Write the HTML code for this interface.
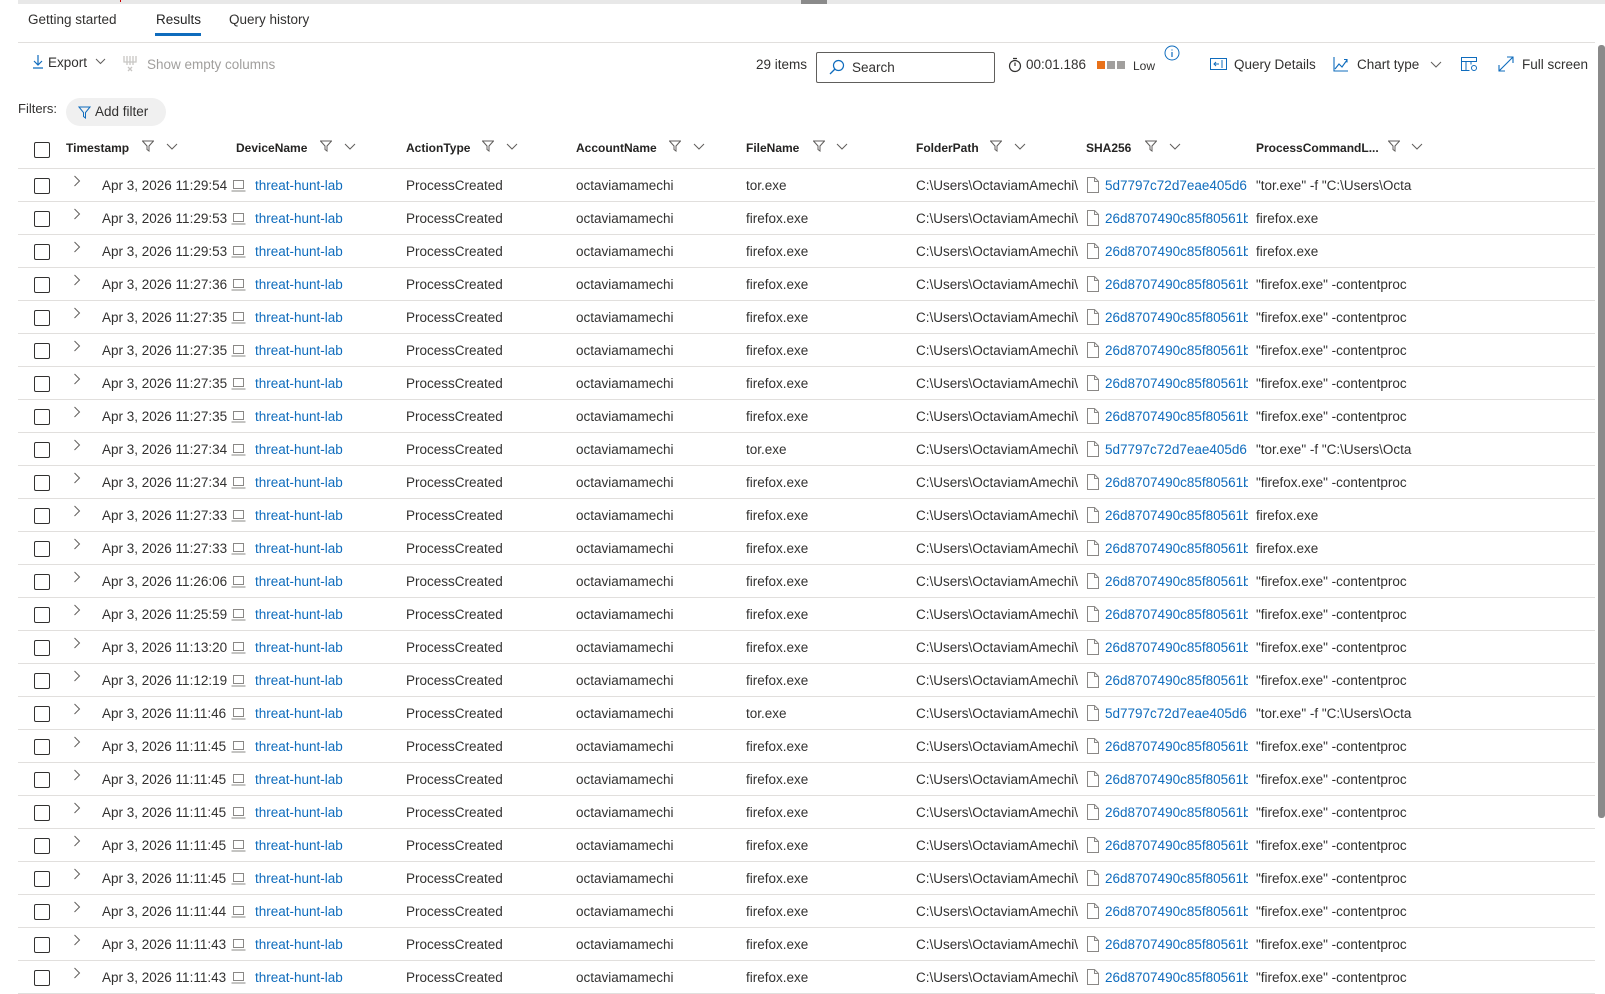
<!DOCTYPE html>
<html><head><meta charset="utf-8"><style>
*{box-sizing:border-box;margin:0;padding:0}
body{width:1605px;height:981px;overflow:hidden;background:#fff;font-family:"Liberation Sans",sans-serif;color:#323130;font-size:13.5px;position:relative}
.a{position:absolute;white-space:nowrap}
.blue{color:#0f6cbd}
.row{position:absolute;left:18px;width:1577px;height:33px;border-bottom:1px solid #e1dfdd}
.row .a{top:9px}
.cb{position:absolute;left:16px;top:9px;width:16px;height:16px;border:1.3px solid #323130;border-radius:2px}
.hd{font-weight:bold;font-size:12px;color:#252423}
.clip{overflow:hidden}
svg{position:absolute}
</style></head><body>
<div class="a" style="left:18px;top:0;width:1587px;height:4px;background:#e8e8e8"></div>
<div class="a" style="left:801px;top:0;width:26px;height:4px;background:#8a8a8a"></div>
<div class="a" style="left:120px;top:0;width:1px;height:2px;background:#c00"></div>

<div class="a" style="left:28px;top:12px;font-size:13.5px">Getting started</div>
<div class="a" style="left:156px;top:12px;font-size:13.5px;color:#242424">Results</div>
<div class="a" style="left:155px;top:33px;width:46px;height:3px;background:#0f6cbd"></div>
<div class="a" style="left:229px;top:12px;font-size:13.5px">Query history</div>
<div class="a" style="left:18px;top:42px;width:1577px;height:1px;background:#e1dfdd"></div>

<svg style="left:32px;top:54px" width="12" height="16" viewBox="0 0 12 16"><path d="M6 1v10M2 7l4 4 4-4M1 14h10" stroke="#0f6cbd" stroke-width="1.2" fill="none"/></svg>
<div class="a" style="left:48px;top:55px">Export</div>
<svg style="left:95px;top:58px" width="11" height="7" viewBox="0 0 11 7"><path d="M1 1l4.5 4.5L10 1" stroke="#605e5c" fill="none"/></svg>
<svg style="left:122px;top:55px" width="16" height="18" viewBox="0 0 16 18"><path d="M2 1v6h12V1M5 1v9M8 1v9M11 1v9M6 12l4 4M10 12l-4 4" stroke="#c8c6c4" stroke-width="1.3" fill="none"/></svg>
<div class="a" style="left:147px;top:57px;color:#a19f9d">Show empty columns</div>

<div class="a" style="left:756px;top:57px">29 items</div>
<div class="a" style="left:816px;top:52px;width:179px;height:31px;border:1px solid #605e5c;border-radius:2px"></div>
<svg style="left:829px;top:59px" width="16" height="16" viewBox="0 0 16 16"><circle cx="9.5" cy="6.5" r="5" stroke="#0f6cbd" stroke-width="1.2" fill="none"/><path d="M6 10l-5 5" stroke="#0f6cbd" stroke-width="1.3"/></svg>
<div class="a" style="left:852px;top:60px">Search</div>
<svg style="left:1008px;top:57px" width="14" height="16" viewBox="0 0 14 16"><circle cx="7" cy="9" r="5.5" stroke="#323130" stroke-width="1.2" fill="none"/><path d="M5 1.5h4M7 9V5.5" stroke="#323130" stroke-width="1.2"/></svg>
<div class="a" style="left:1026px;top:57px">00:01.186</div>
<div class="a" style="left:1097px;top:61px;width:8px;height:8px;background:#e8711a"></div>
<div class="a" style="left:1107px;top:61px;width:8px;height:8px;background:#a19f9d"></div>
<div class="a" style="left:1117px;top:61px;width:8px;height:8px;background:#a19f9d"></div>
<div class="a" style="left:1133px;top:59px;font-size:12px">Low</div>
<svg style="left:1164px;top:45px" width="16" height="16" viewBox="0 0 16 16"><circle cx="8" cy="8" r="7" stroke="#0f6cbd" fill="none"/><path d="M8 7v5M8 4.5v1" stroke="#0f6cbd" stroke-width="1.2"/></svg>
<svg style="left:1210px;top:58px" width="17" height="12" viewBox="0 0 17 12"><rect x="0.5" y="0.5" width="16" height="11" stroke="#0f6cbd" fill="none"/><path d="M12 2v8M9 6H4M6 4L4 6l2 2" stroke="#0f6cbd" fill="none"/></svg>
<div class="a" style="left:1234px;top:57px">Query Details</div>
<svg style="left:1333px;top:56px" width="16" height="16" viewBox="0 0 16 16"><path d="M1 1v14h14M2 13l4-5 3 3 5-7M11 3.5h3v3" stroke="#0f6cbd" fill="none" stroke-width="1.1"/></svg>
<div class="a" style="left:1357px;top:57px">Chart type</div>
<svg style="left:1430px;top:61px" width="12" height="7" viewBox="0 0 12 7"><path d="M1 1l5 5 5-5" stroke="#605e5c" fill="none"/></svg>
<svg style="left:1461px;top:56px" width="17" height="16" viewBox="0 0 17 16"><path d="M.5 1.5h15v4H.5zM.5 5.5v9h8M5 5.5v9M10 5.5v3" stroke="#0f6cbd" fill="none"/><circle cx="13" cy="12" r="2.5" stroke="#0f6cbd" fill="none"/></svg>
<svg style="left:1498px;top:56px" width="16" height="16" viewBox="0 0 16 16"><path d="M1 15L15 1M9 1h6v6M1 9v6h6" stroke="#0f6cbd" fill="none" stroke-width="1.1"/></svg>
<div class="a" style="left:1522px;top:57px">Full screen</div>

<div class="a" style="left:1598px;top:45px;width:7px;height:773px;background:#8a8a8a;border-radius:3px"></div>

<div class="a" style="left:18px;top:101px;font-size:13px">Filters:</div>
<div class="a" style="left:66px;top:98px;width:100px;height:28px;background:#f0f0f0;border-radius:14px"></div>
<svg style="left:78px;top:106px" width="13" height="13" viewBox="0 0 13 13"><path d="M1 1h11L7.5 6.5V12L5.5 10.5V6.5z" stroke="#0f6cbd" fill="none"/></svg>
<div class="a" style="left:95px;top:104px">Add filter</div>

<div class="row" style="top:131px;height:38px"><div class="cb" style="top:11px"></div></div>
<div id="hdr"></div>
<div id="rows"></div>
<script>
var cols=[["Timestamp",66,142,166],["DeviceName",236,320,344],["ActionType",406,482,506],["AccountName",576,669,693],["FileName",746,813,836],["FolderPath",916,990,1014],["SHA256",1086,1145,1169],["ProcessCommandL...",1256,1388,1411]];
var h="";
cols.forEach(function(c){
 h+='<div class="a hd" style="left:'+c[1]+'px;top:141px">'+c[0]+'</div>';
 h+='<svg style="left:'+c[2]+'px;top:140px" width="12" height="12" viewBox="0 0 12 12"><path d="M.5 1h11L7 6v5L5 9.5V6z" stroke="#605e5c" fill="none"/></svg>';
 h+='<svg style="left:'+c[3]+'px;top:143px" width="12" height="7" viewBox="0 0 12 7"><path d="M1 1l5 5 5-5" stroke="#605e5c" fill="none"/></svg>';
});
document.getElementById("hdr").outerHTML=h;
var T={t:["tor.exe","5d7797c72d7eae405d6",'"tor.exe" -f "C:\\Users\\Octa'],p:["firefox.exe","26d8707490c85f80561b","firefox.exe"],c:["firefox.exe","26d8707490c85f80561b",'"firefox.exe" -contentproc']};
var d=[["11:29:54","t"],["11:29:53","p"],["11:29:53","p"],["11:27:36","c"],["11:27:35","c"],["11:27:35","c"],["11:27:35","c"],["11:27:35","c"],["11:27:34","t"],["11:27:34","c"],["11:27:33","p"],["11:27:33","p"],["11:26:06","c"],["11:25:59","c"],["11:13:20","c"],["11:12:19","c"],["11:11:46","t"],["11:11:45","c"],["11:11:45","c"],["11:11:45","c"],["11:11:45","c"],["11:11:45","c"],["11:11:44","c"],["11:11:43","c"],["11:11:43","c"]];
var r="";
d.forEach(function(e,i){
 var y=169+i*33,v=T[e[1]];
 r+='<div class="row" style="top:'+y+'px"><div class="cb"></div>'+
 '<svg style="left:55px;top:6px" width="8" height="12" viewBox="0 0 8 12"><path d="M1.5 1l5 5-5 5" stroke="#605e5c" fill="none"/></svg>'+
 '<div class="a" style="left:84px">Apr 3, 2026 '+e[0]+'</div>'+
 '<svg style="left:213px;top:11px" width="15" height="12" viewBox="0 0 15 12"><path d="M2.5.5h10v8h-10zM.5 11h14" stroke="#8a8886" fill="none"/></svg>'+
 '<div class="a blue" style="left:237px">threat-hunt-lab</div>'+
 '<div class="a" style="left:388px">ProcessCreated</div>'+
 '<div class="a" style="left:558px">octaviamamechi</div>'+
 '<div class="a" style="left:728px">'+v[0]+'</div>'+
 '<div class="a clip" style="left:898px;width:162px">C:\\Users\\OctaviamAmechi\\Downloads</div>'+
 '<svg style="left:1069px;top:8px" width="12" height="16" viewBox="0 0 12 16"><path d="M.5.5h7l4 4v11H.5zM7.5.5v4h4" stroke="#8a8886" fill="none"/></svg>'+
 '<div class="a blue clip" style="left:1087px;width:143px">'+v[1]+'</div>'+
 '<div class="a clip" style="left:1238px;width:162px">'+v[2]+'</div></div>';
});
document.getElementById("rows").outerHTML=r;
</script>
</body></html>
